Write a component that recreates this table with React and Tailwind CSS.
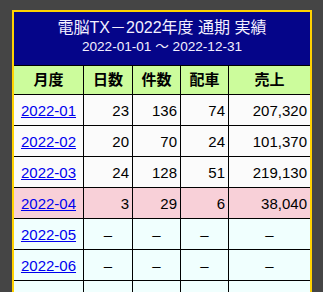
import React from "react";

const rows = [
  ["2022-01", "23", "136", "74", "207,320", "past"],
  ["2022-02", "20", "70", "24", "101,370", "past"],
  ["2022-03", "24", "128", "51", "219,130", "past"],
  ["2022-04", "3", "29", "6", "38,040", "cur"],
  ["2022-05", "–", "–", "–", "–", "fut"],
  ["2022-06", "–", "–", "–", "–", "fut"],
  ["2022-07", "–", "–", "–", "–", "fut"],
  ["2022-08", "–", "–", "–", "–", "fut"],
  ["2022-09", "–", "–", "–", "–", "fut"],
  ["2022-10", "–", "–", "–", "–", "fut"],
  ["2022-11", "–", "–", "–", "–", "fut"],
  ["2022-12", "–", "–", "–", "–", "fut"],
];

const bgFor = (k) =>
  k === "past" ? "bg-[#fbfbfb]" : k === "cur" ? "bg-[#f8d0d8]" : "bg-[#f0fffe]";

export default function App() {
  return (
    <div
      className="min-h-screen bg-[#454545] pl-[12px] pt-[10px]"
      style={{ fontFamily: '"Liberation Sans", Arial, "Noto Sans CJK JP", sans-serif' }}
    >
      <div className="w-[300px] border-2 border-[#ffd200] bg-black">
        <div className="grid grid-cols-[69px_48px_47px_47px_81px] gap-px">
          <div className="col-span-5 h-[53px] bg-[#050589] pt-[6px] text-center text-[#f4f0ff]">
            <div className="h-[20px] text-[16px] leading-[20px]">電脳TX－2022年度 通期 実績</div>
            <div className="h-[17px] text-[13.6px] leading-[17px]">2022-01-01 ～ 2022-12-31</div>
          </div>
          {["月度", "日数", "件数", "配車", "売上"].map((h) => (
            <div
              key={h}
              className="flex h-[28px] items-center justify-center bg-[#ccfc9c] text-[15px] font-bold text-black"
            >
              {h}
            </div>
          ))}
          {rows.map((r) => (
            <React.Fragment key={r[0]}>
              <div className={`flex h-[30px] items-center justify-center pt-[2px] text-[15px] ${bgFor(r[5])}`}>
                <a href="#" className="text-[#0000ee] underline">
                  {r[0]}
                </a>
              </div>
              {r.slice(1, 5).map((v, i) => (
                <div
                  key={i}
                  className={`flex h-[30px] items-center pt-[2px] text-[15px] text-black ${
                    v === "–" ? "justify-center" : "justify-end pr-[3px]"
                  } ${bgFor(r[5])}`}
                >
                  {v}
                </div>
              ))}
            </React.Fragment>
          ))}
        </div>
      </div>
    </div>
  );
}
